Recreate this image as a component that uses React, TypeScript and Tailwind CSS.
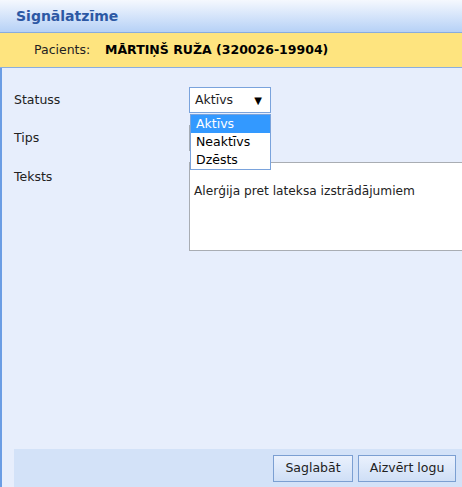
import React from "react"

const FONT = "font-['DejaVu_Sans',sans-serif]"

function Select({ value, open }: { value: string; open?: boolean }) {
  return (
    <div
      className={[
        "w-[82px] h-[26px] bg-white border flex items-center justify-between pl-[5px] pr-[8px]",
        open ? "border-[#7aa3dc]" : "border-[#a5acb5]",
      ].join(" ")}
    >
      <span>{value}</span>
      <span className="text-[10px] text-black">▼</span>
    </div>
  )
}

export default function App() {
  const options = ["Aktīvs", "Neaktīvs", "Dzēsts"]

  return (
    <div className={`w-[462px] h-[487px] flex flex-col overflow-hidden bg-[#e7eefc] text-[12.5px] text-[#222] ${FONT}`}>
      {/* header */}
      <div className="h-[33px] shrink-0 flex items-center pl-[16px] bg-gradient-to-b from-[#f5f8fe] to-[#b6d1f6] border-b border-[#89acdf]">
        <span className="text-[14px] font-bold text-[#2c58a4]">Signālatzīme</span>
      </div>

      {/* patient bar */}
      <div className="h-[35px] shrink-0 flex items-center pl-[34px] bg-[#fee47f] border-b border-[#8aaedf]">
        <span className="w-[71px] text-[#222]">Pacients:</span>
        <span className="font-bold text-black">MĀRTIŅŠ RUŽA (320026-19904)</span>
      </div>

      {/* body */}
      <div className="flex-1 flex flex-col border-l-2 border-[#6b9de4]">
        <div className="flex flex-col pt-[19px] pl-[12px]">
          <div className="flex">
            <div className="w-[175px] h-[26px] flex items-center pt-[1px]">Statuss</div>
            <div className="relative">
              <Select value="Aktīvs" open />
              <div className="absolute left-[1px] top-[27px] z-10 w-[81px] bg-white border border-[#7aa3dc]">
                {options.map((o, i) => (
                  <div
                    key={o}
                    className={[
                      "h-[18px] leading-[18px] pl-[5px]",
                      i === 0 ? "bg-[#3399ff] text-white" : "text-black",
                    ].join(" ")}
                  >
                    {o}
                  </div>
                ))}
              </div>
            </div>
          </div>

          <div className="flex mt-[12px]">
            <div className="w-[175px] h-[26px] flex items-center">Tips</div>
            <Select value="" />
          </div>

          <div className="flex mt-[11px]">
            <div className="w-[175px] pt-[6px]">Teksts</div>
            <div className="flex-1 h-[89px] bg-white border border-[#a9adb3] border-r-0 pt-[19px] pl-[4px] text-[12.2px]">
              Alerģija pret lateksa izstrādājumiem
            </div>
          </div>
        </div>

        <div className="flex-1" />

        {/* footer */}
        <div className="ml-[12px] h-[38px] shrink-0 bg-[#d3e2f8] flex justify-end items-start gap-[5px] pt-[6px] pr-[6px]">
          <button className="h-[27px] w-[80px] border border-[#7b9fd2] bg-gradient-to-b from-[#eaf1fd] to-[#cfdff6] text-[#222]">
            Saglabāt
          </button>
          <button className="h-[27px] w-[98px] border border-[#7b9fd2] bg-gradient-to-b from-[#eaf1fd] to-[#cfdff6] text-[#222]">
            Aizvērt logu
          </button>
        </div>
      </div>
    </div>
  )
}
